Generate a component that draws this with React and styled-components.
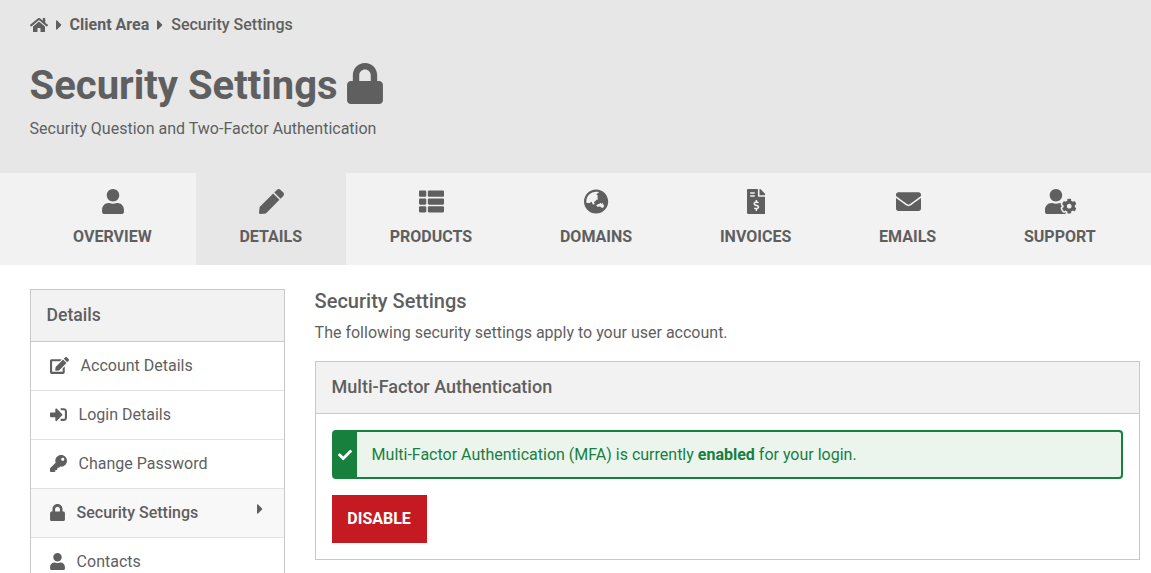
import React from 'react';
import styled, { createGlobalStyle } from 'styled-components';
import {
  FaHome, FaCaretRight, FaLock, FaUser, FaPen, FaThList, FaGlobeAsia,
  FaFileInvoiceDollar, FaEnvelope, FaUserCog, FaEdit, FaSignInAlt, FaKey, FaCheck,
} from 'react-icons/fa';

const GlobalStyle = createGlobalStyle`
  html, body {
    margin: 0;
    height: 573px;
    overflow: hidden;
    background: #fff;
    color: #5f5f5f;
    font-family: Roboto, "Liberation Sans", sans-serif;
    font-size: 16px;
  }
`;

const Header = styled.header`
  height: 173px;
  box-sizing: border-box;
  padding: 14px 30px 0 29.6px;
  background: #e7e7e7;
`;

const Breadcrumb = styled.div`
  display: flex;
  align-items: center;
  height: 21px;
  font-size: 16px;
  font-weight: 700;
`;

const BreadcrumbCurrent = styled.span`
  font-weight: 500;
`;

const BreadcrumbSep = styled(FaCaretRight)`
  width: 6px;
  height: 16px;
  margin: 0 8px;
`;

const Title = styled.h1`
  display: flex;
  align-items: center;
  gap: 9px;
  margin: 26px 0 0;
  height: 50px;
  font-size: 40px;
  font-weight: 700;
  line-height: 50px;

  svg {
    width: 36px;
    height: 41px;
    margin-top: -6px;
  }
`;

const Subtitle = styled.p`
  margin: 6px 0 0;
  font-size: 16px;
  line-height: 24px;
`;

const Nav = styled.nav`
  display: flex;
  height: 92px;
  padding-left: 29.2px;
  background: #f2f2f2;
`;

const Tab = styled.div`
  display: flex;
  flex-direction: column;
  align-items: center;
  padding: 15px 43.9px 0;
  background: ${(p) => (p.$active ? '#e7e7e7' : 'transparent')};
  font-size: 16px;
  font-weight: 700;
  text-transform: uppercase;
`;

const TabIcon = styled.div`
  display: flex;
  align-items: center;
  justify-content: center;
  height: 26px;
  margin-bottom: 12px;
  padding-left: 1px;

  svg {
    width: ${(p) => p.$w}px;
    height: 25px;
  }
`;

const TabLabel = styled.span`
  line-height: 22px;
`;

const Content = styled.div`
  display: flex;
  align-items: flex-start;
  padding: 24px 11px 0 30px;
`;

const Sidebar = styled.aside`
  flex: none;
  width: 255px;
  box-sizing: border-box;
  margin-right: 29.6px;
  border: 1px solid #c9c9c9;
`;

const SidebarTitle = styled.div`
  height: 52px;
  box-sizing: border-box;
  padding: 0 0 1px 15.6px;
  display: flex;
  align-items: center;
  background: #f2f2f2;
  border-bottom: 1px solid #c9c9c9;
  font-size: 17.6px;
  font-weight: 500;
`;

const SidebarItem = styled.div`
  display: flex;
  align-items: center;
  height: 49px;
  box-sizing: border-box;
  padding: 0 21px 1px 19px;
  background: ${(p) => (p.$active ? '#f8f8f8' : '#fff')};
  border-bottom: 1px solid #e2e2e2;
  font-weight: ${(p) => (p.$active ? 500 : 400)};
`;

const SidebarIcon = styled.span`
  display: flex;
  justify-content: flex-start;
  flex: none;
  width: ${(p) => p.$w}px;

  svg {
    width: ${(p) => p.$icon}px;
    height: 17px;
  }
`;

const SidebarCaret = styled(FaCaretRight)`
  margin-left: auto;
  margin-top: -8px;
  width: 6px;
  height: 16px;
`;

const Main = styled.main`
  flex: 1;
  min-width: 0;
`;

const SectionTitle = styled.h2`
  margin: 0;
  font-size: 20px;
  font-weight: 500;
  line-height: 24px;
`;

const Intro = styled.p`
  margin: 8px 0 16px;
  line-height: 24px;
`;

const Panel = styled.section`
  border: 1px solid #c9c9c9;
`;

const PanelHead = styled.div`
  display: flex;
  align-items: center;
  height: 52px;
  box-sizing: border-box;
  padding: 0 0 3px 16px;
  background: #f2f2f2;
  border-bottom: 1px solid #c9c9c9;
  font-size: 18px;
  font-weight: 500;
`;

const PanelBody = styled.div`
  padding: 16px;
`;

const Alert = styled.div`
  display: flex;
  align-items: stretch;
  height: 49px;
  box-sizing: border-box;
  border: 2px solid #17803d;
  border-radius: 4px;
  background: #ebf5ee;
  color: #17803d;
  line-height: 45px;
`;

const AlertIcon = styled.span`
  flex: none;
  display: flex;
  align-items: center;
  justify-content: center;
  width: 23px;
  margin-right: 15px;
  background: #17803d;
  color: #fff;
  font-size: 14px;
`;

const DangerButton = styled.button`
  display: block;
  width: 95px;
  height: 48px;
  margin-top: 16px;
  padding: 0 0 2px;
  border: 0;
  background: #c61a23;
  color: #fff;
  font-family: inherit;
  font-size: 16px;
  font-weight: 700;
  text-transform: uppercase;
`;

const tabs = [
  { label: 'Overview', icon: <FaUser />, w: 22 },
  { label: 'Details', icon: <FaPen />, w: 25, active: true },
  { label: 'Products', icon: <FaThList />, w: 25 },
  { label: 'Domains', icon: <FaGlobeAsia />, w: 24.2 },
  { label: 'Invoices', icon: <FaFileInvoiceDollar />, w: 18.75 },
  { label: 'Emails', icon: <FaEnvelope />, w: 25 },
  { label: 'Support', icon: <FaUserCog />, w: 31.25 },
];

const menu = [
  { label: 'Account Details', icon: <FaEdit />, w: 30.6, iconW: 19 },
  { label: 'Login Details', icon: <FaSignInAlt />, w: 28.6, iconW: 17 },
  { label: 'Change Password', icon: <FaKey />, w: 28.6, iconW: 17 },
  { label: 'Security Settings', icon: <FaLock />, w: 26.6, iconW: 15, active: true },
  { label: 'Contacts', icon: <FaUser />, w: 26.6, iconW: 15 },
];

export default function App() {
  return (
    <>
      <GlobalStyle />
      <Header>
        <Breadcrumb>
          <FaHome size={18} />
          <BreadcrumbSep />
          Client Area
          <BreadcrumbSep />
          <BreadcrumbCurrent>Security Settings</BreadcrumbCurrent>
        </Breadcrumb>
        <Title>
          Security Settings
          <FaLock />
        </Title>
        <Subtitle>Security Question and Two-Factor Authentication</Subtitle>
      </Header>
      <Nav>
        {tabs.map((tab) => (
          <Tab key={tab.label} $active={tab.active}>
            <TabIcon $w={tab.w}>{tab.icon}</TabIcon>
            <TabLabel>{tab.label}</TabLabel>
          </Tab>
        ))}
      </Nav>
      <Content>
        <Sidebar>
          <SidebarTitle>Details</SidebarTitle>
          {menu.map((item) => (
            <SidebarItem key={item.label} $active={item.active}>
              <SidebarIcon $w={item.w} $icon={item.iconW}>{item.icon}</SidebarIcon>
              {item.label}
              {item.active ? <SidebarCaret /> : null}
            </SidebarItem>
          ))}
        </Sidebar>
        <Main>
          <SectionTitle>Security Settings</SectionTitle>
          <Intro>The following security settings apply to your user account.</Intro>
          <Panel>
            <PanelHead>Multi-Factor Authentication</PanelHead>
            <PanelBody>
              <Alert>
                <AlertIcon><FaCheck /></AlertIcon>
                <span>
                  Multi-Factor Authentication (MFA) is currently
                  {' '}
                  <strong>enabled</strong>
                  {' '}
                  for your login.
                </span>
              </Alert>
              <DangerButton>Disable</DangerButton>
            </PanelBody>
          </Panel>
        </Main>
      </Content>
    </>
  );
}
